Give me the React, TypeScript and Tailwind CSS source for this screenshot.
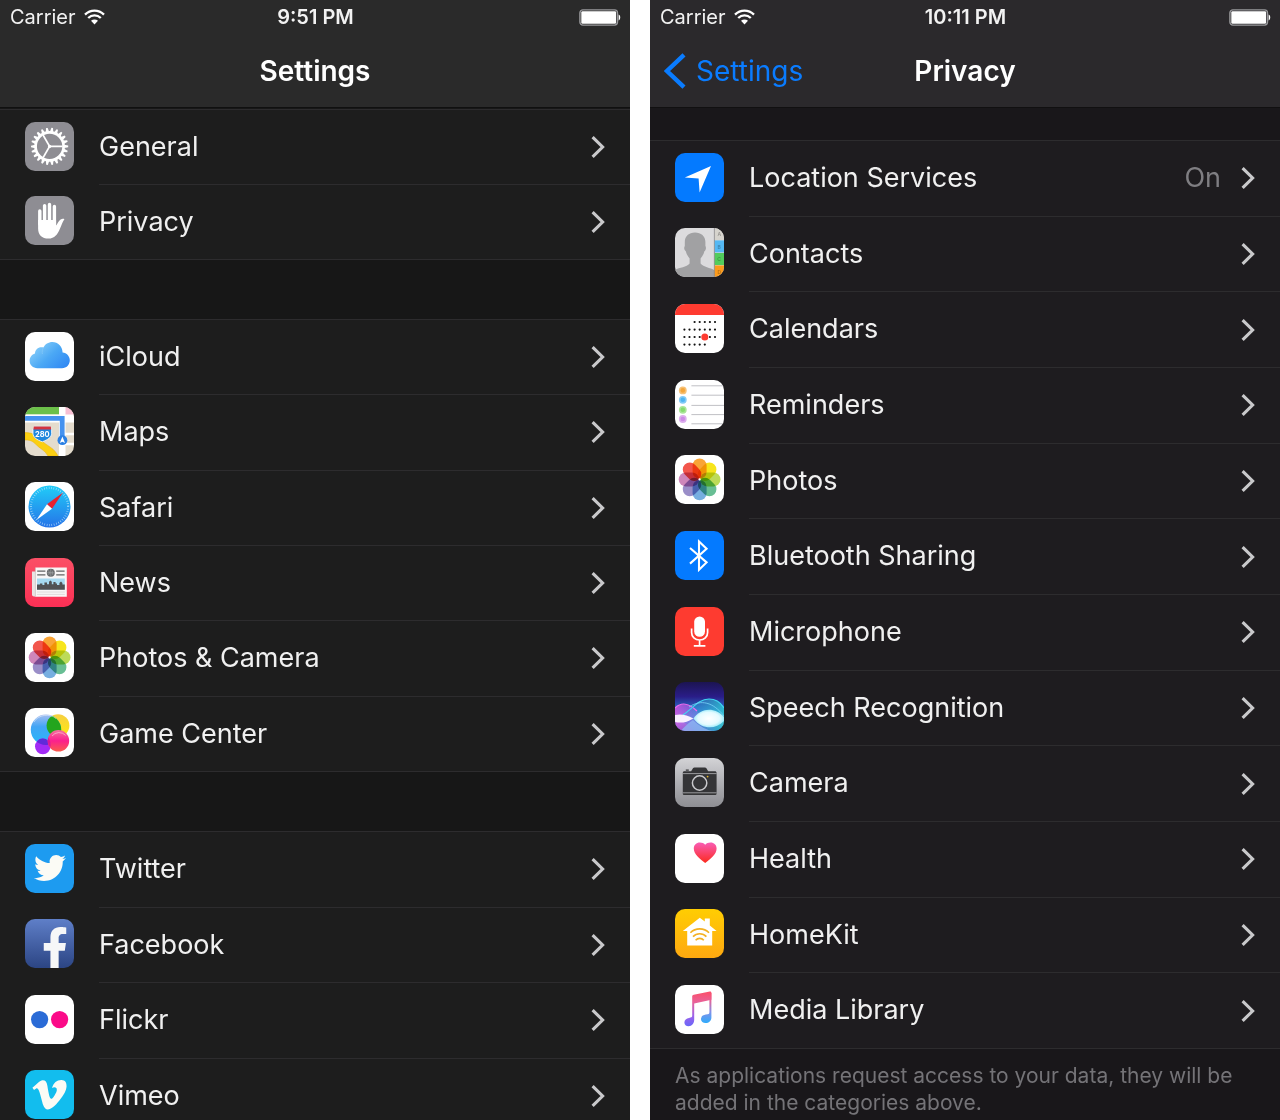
import React from "react";
import { FaTwitter, FaFacebookF, FaVimeoV } from "react-icons/fa";

type Item = { label: string; icon: React.ReactNode; value?: string };

function Tile({ children, className = "" }: { children: React.ReactNode; className?: string }) {
  return (
    <span className={`relative flex size-[49px] shrink-0 items-center justify-center overflow-hidden rounded-[10px] ${className}`}>
      {children}
    </span>
  );
}

function Art({ children }: { children: React.ReactNode }) {
  return (
    <svg viewBox="0 0 49 49" className="size-full" aria-hidden="true">
      {children}
    </svg>
  );
}

function GeneralIcon() {
  const teeth = Array.from({ length: 22 }, (_, i) => (i * 360) / 22);
  return (
    <Tile className="bg-[#8e8d93]">
      <Art>
        <g transform="translate(24.6 24.4)" stroke="#fff" fill="none">
          {teeth.map((a) => (
            <path key={a} d="M-1.7 -14.6L-0.8 -18.6H0.8L1.7 -14.6Z" fill="#fff" stroke="none" transform={`rotate(${a + 8})`} />
          ))}
          <circle r="14" strokeWidth="2.7" />
          {[0, 120, 240].map((a) => (
            <path key={a} d="M0 0H13" strokeWidth="1.8" transform={`rotate(${a})`} />
          ))}
          <circle r="1.6" fill="#fff" stroke="none" />
        </g>
      </Art>
    </Tile>
  );
}

function PrivacyIcon() {
  return (
    <Tile className="bg-[#8e8d93]">
      <Art>
        <g fill="none" stroke="#fff" strokeLinecap="round" strokeWidth="3.4">
          <path d="M14.8 15V28M19.6 9.6V27M24.5 8.4V27M29.4 10.4V28" />
        </g>
        <path
          d="M13.1 24H31.1V29.6C32.6 27.6 33.6 24.6 35.6 23.4C37 22.6 39 22.8 39.4 23.2C37.6 25.4 36.6 29 34.8 33C32.6 38.4 29.4 42.6 23.6 42.6C16.8 42.6 13.1 38.6 13.1 32.4Z"
          fill="#fff"
        />
      </Art>
    </Tile>
  );
}

function ICloudIcon() {
  return (
    <Tile className="bg-white">
      <Art>
        <defs>
          <linearGradient id="cloud" x1="0" y1="0.2" x2="1" y2="0.9">
            <stop offset="0" stopColor="#8fd3fa" />
            <stop offset="0.5" stopColor="#4ba8f5" />
            <stop offset="1" stopColor="#2f86f3" />
          </linearGradient>
        </defs>
        <path
          d="M12.4 36.2C8 36.2 4.6 33 4.6 28.8C4.6 25.4 6.8 22.6 10 21.6C10 17.8 13 15.2 16.2 15.2C17 15.2 17.8 15.4 18.4 15.6C20 12.2 23.4 10 27.4 10C33 10 37.4 14.4 37.6 20.4C41.8 20.8 44.8 24.2 44.8 28.2C44.8 32.6 41.4 36.2 37 36.2Z"
          fill="url(#cloud)"
        />
        <path d="M18.2 15.6C17.2 18 17 20 17.4 22" stroke="#8bcdf9" strokeWidth="0.6" fill="none" />
      </Art>
    </Tile>
  );
}

function MapsIcon() {
  return (
    <Tile className="bg-[#e4dccd]">
      <Art>
        <path d="M0 0H34V7.6H0Z" fill="#6cc04a" />
        <path d="M40 0H49V8H40Z" fill="#f7bfd3" />
        <path d="M34 0H40.5V49H34Z" fill="#fff" />
        <path d="M0 7.6H49V15.4H0Z" fill="#fff" />
        <path d="M40 27H49M40 37H49" stroke="#fff" strokeWidth="2.4" />
        <path d="M0 25.5C9 25.5 13 30 18 35C24 40 29 41 33 49H23C20 43 15 42 10 36.5C6 33 4 33 0 33Z" fill="#fbcf12" stroke="#eeb50c" strokeWidth="0.6" />
        <path d="M0 11.4H37.2V31" stroke="#4592ef" strokeWidth="4.8" fill="none" />
        <path d="M8 22.6C8.8 21.6 9.4 20.6 9.2 19.4H25.4C25.2 20.6 25.8 21.6 26.6 22.6V26.4C26.6 30.4 23 32.6 17.3 34.8C11.6 32.6 8 30.4 8 26.4Z" fill="#2187dd" stroke="#fff" strokeWidth="0.8" />
        <path d="M8.8 19.4H25.8L26.2 22.4H8.4Z" fill="#d3343f" />
        <text x="17.3" y="29.8" textAnchor="middle" fontSize="7.5" fontWeight="700" fill="#fff" fontFamily="Inter, sans-serif">280</text>
        <circle cx="37.4" cy="33.2" r="4.9" fill="#2b80e4" />
        <path d="M37.4 29.6L40 36L37.4 34.8L34.8 36Z" fill="#fff" />
      </Art>
    </Tile>
  );
}

function SafariIcon() {
  return (
    <Tile className="bg-white">
      <Art>
        <defs>
          <linearGradient id="compass" x1="0" y1="0" x2="0" y2="1">
            <stop offset="0" stopColor="#21cdf8" />
            <stop offset="1" stopColor="#2573e8" />
          </linearGradient>
        </defs>
        <circle cx="24.5" cy="24.5" r="21" fill="url(#compass)" />
        <circle cx="24.5" cy="24.5" r="18.6" fill="none" stroke="#cfeefd" strokeOpacity="0.8" strokeWidth="2.2" strokeDasharray="0.6 1.8" />
        <path d="M38 10.6L27 26.8L22 22.2Z" fill="#e8202f" />
        <path d="M11.4 38L27 26.8L22 22.2Z" fill="#fff" />
      </Art>
    </Tile>
  );
}

function NewsIcon() {
  return (
    <Tile className="bg-linear-to-b from-[#fb4f66] to-[#fb2f55]">
      <Art>
        <path d="M7 13.6H11V38.6H9C7.8 38.6 7 37.8 7 36.6Z" fill="#e8e4e4" />
        <path d="M10.4 9.4H41.8V38.8H10.4Z" fill="#f8f6f6" />
        <path d="M10.4 10V38.6" stroke="#c2b4b6" strokeWidth="0.6" />
        <path d="M12.2 13.2H20.4M31.2 13.2H39.6M12.2 16.8H20.4M31.2 16.8H39.6" stroke="#636465" strokeWidth="1.3" />
        <circle cx="25.8" cy="14.8" r="4" fill="#66686a" />
        <path d="M22 14.8H29.6M25.8 11V18.6M23.4 12.4C24.6 14 24.6 15.8 23.4 17.2M28.2 12.4C27 14 27 15.8 28.2 17.2" stroke="#c8caca" strokeWidth="0.4" fill="none" />
        <path d="M12 20.4H39.8V31.6H12Z" fill="#a6daf1" />
        <path d="M12 26.6H15V25.4H17.4V27H19.4V24.4H22V26.2H24V23.8L25.4 22.4L26.8 23.8V26.2H28.4V24H30.6V25.6H32V27H34.4V25L36 23.6L37.4 25V26.4H39.8V31.8H12Z" fill="#505254" />
        <path d="M12 34H39.8M12 36.4H39.8" stroke="#dcd8d8" strokeWidth="0.9" />
      </Art>
    </Tile>
  );
}

const petals = ["#f9a436", "#f7e51c", "#bddb58", "#68be94", "#76aee0", "#9a8ec8", "#ce86ba", "#f2564c"];

function PhotosIcon() {
  return (
    <Tile className="bg-white">
      <Art>
        <g transform="translate(24.6 24.4)" className="isolate">
          {petals.map((c, i) => (
            <rect key={c} x="-7" y="-20.9" width="14" height="20.4" rx="7" fill={c} className="mix-blend-multiply" transform={`rotate(${i * 45})`} />
          ))}
        </g>
        <circle cx="24.6" cy="24.4" r="1.1" fill="#fff" />
      </Art>
    </Tile>
  );
}

function GameCenterIcon() {
  return (
    <Tile className="bg-white">
      <Art>
        <defs>
          <linearGradient id="gcBlue" x1="0" y1="0" x2="0" y2="1">
            <stop offset="0" stopColor="#a4bdf0" />
            <stop offset="0.4" stopColor="#42a5f5" />
            <stop offset="1" stopColor="#28b8f9" />
          </linearGradient>
          <linearGradient id="gcYellow" x1="0" y1="0" x2="0" y2="1">
            <stop offset="0" stopColor="#f6cf43" />
            <stop offset="1" stopColor="#fdea0b" />
          </linearGradient>
          <linearGradient id="gcPink" x1="0" y1="0" x2="0" y2="1">
            <stop offset="0" stopColor="#f5719d" />
            <stop offset="0.5" stopColor="#fb1f8e" />
            <stop offset="1" stopColor="#fb5a4a" />
          </linearGradient>
          <clipPath id="gcClip">
            <circle cx="21" cy="21.8" r="15.2" />
          </clipPath>
        </defs>
        <circle cx="33" cy="17.6" r="11.4" fill="url(#gcYellow)" />
        <circle cx="21" cy="21.8" r="15.2" fill="url(#gcBlue)" />
        <circle cx="33" cy="17.6" r="11.4" fill="#23a51d" clipPath="url(#gcClip)" />
        <circle cx="17.8" cy="38.4" r="7.8" fill="#a22bf5" />
        <circle cx="17.8" cy="38.4" r="7.8" fill="#5f2ad9" clipPath="url(#gcClip)" />
        <circle cx="33.4" cy="32.8" r="10.8" fill="url(#gcPink)" />
        <path d="M24.6 38.6A10.8 10.8 0 0 1 23.4 29.4A15 15 0 0 1 25.6 38.4Z" fill="#d9169c" />
        <path d="M9 14C13 6.6 25 5 31 10.6M27 28A9 9 0 0 1 40.6 27.4" stroke="#fff" strokeOpacity="0.45" strokeWidth="1" fill="none" />
      </Art>
    </Tile>
  );
}

function TwitterIcon() {
  return (
    <Tile className="bg-[#1d9bf0]">
      <FaTwitter className="size-8 text-[#fbfbf5]" aria-hidden="true" />
    </Tile>
  );
}

function FacebookIcon() {
  return (
    <Tile className="bg-linear-to-b from-[#5f7fc8] to-[#2c4584]">
      <FaFacebookF className="absolute -bottom-px left-[9px] size-[42px] text-[#f6f7f8]" aria-hidden="true" />
    </Tile>
  );
}

function FlickrIcon() {
  return (
    <Tile className="bg-white">
      <Art>
        <circle cx="14.6" cy="24.6" r="8.6" fill="#2a6bd6" />
        <circle cx="34.6" cy="24.6" r="8.6" fill="#fb0a88" />
      </Art>
    </Tile>
  );
}

function VimeoIcon() {
  return (
    <Tile className="bg-[#12bdee]">
      <FaVimeoV className="size-[39px] text-[#fbfbf5]" aria-hidden="true" />
    </Tile>
  );
}

function LocationIcon() {
  return (
    <Tile className="bg-[#047aff]">
      <Art>
        <path d="M36 13L24.6 39.6L23.6 25.6L9.8 24.4Z" fill="#fff" />
      </Art>
    </Tile>
  );
}

function ContactsIcon() {
  const tabs = [
    { l: "A", y: 0, c: "#d6d3cd" },
    { l: "B", y: 12.4, c: "#55b8f3" },
    { l: "C", y: 25, c: "#52cc5c" },
    { l: "D", y: 37.4, c: "#fb9a1c" },
  ];
  return (
    <Tile className="bg-[#dcdbdd]">
      <Art>
        <path
          d="M20 4.4C26 4.4 30.4 8 30.4 14V18C31.4 19.4 31 22 29.4 23.2C28.8 26 27.4 28.4 25.6 30.4V35.6C28.6 39.6 35 39.4 39.6 42.4V49H0V42C4.6 39.4 11.6 39.6 14.6 35.6V30.4C12.8 28.4 11.4 26 10.8 23.2C9 22 8.8 19.4 9.8 18V14C9.8 8 14 4.4 20 4.4Z"
          fill="#a1a1a3"
        />
        <path d="M39.4 0V49" stroke="#78777a" strokeWidth="0.8" />
        {tabs.map((t) => (
          <g key={t.l}>
            <rect x="39.8" y={t.y} width="9.2" height="12" fill={t.c} />
            <text x="44.2" y={t.y + 8.2} textAnchor="middle" fontSize="5" fontWeight="600" fill="#000" fillOpacity="0.3" fontFamily="Inter, sans-serif">{t.l}</text>
          </g>
        ))}
      </Art>
    </Tile>
  );
}

function CalendarsIcon() {
  const rows = [
    { y: 18, from: 2, to: 6 },
    { y: 25.6, from: 0, to: 6 },
    { y: 33, from: 0, to: 6 },
    { y: 40.6, from: 0, to: 4 },
  ];
  return (
    <Tile className="bg-white">
      <Art>
        <path d="M0 0H49V11H0Z" fill="#fe3b30" />
        {rows.map((r) =>
          Array.from({ length: r.to - r.from + 1 }, (_, i) => (
            <circle key={`${r.y}-${i}`} cx={9.4 + (r.from + i) * 5.1} cy={r.y} r="1.1" fill="#111" />
          )),
        )}
        <circle cx="29.8" cy="33" r="3.5" fill="#fe3b30" />
      </Art>
    </Tile>
  );
}

function RemindersIcon() {
  const dots = [
    { y: 10.4, c: "#f3a63c" },
    { y: 19.8, c: "#4db3f2" },
    { y: 29.8, c: "#86da6e" },
    { y: 39, c: "#cd8ae6" },
  ];
  return (
    <Tile className="bg-white">
      <Art>
        {dots.map((d) => (
          <g key={d.y}>
            <circle cx="7.8" cy={d.y} r="3.9" fill={d.c} fillOpacity="0.7" />
            <circle cx="7.8" cy={d.y} r="2.3" fill={d.c} />
          </g>
        ))}
        <path d="M16.4 5.8H49M16.4 15.2H49M16.4 25.4H49M16.4 34.6H49M16.4 43.8H49" stroke="#b9b9bd" strokeWidth="0.9" />
      </Art>
    </Tile>
  );
}

function BluetoothIcon() {
  return (
    <Tile className="bg-[#047aff]">
      <Art>
        <path d="M15 17L31.6 31.4L24 38.8V10.4L31.6 17.8L15 32.6" fill="none" stroke="#fff" strokeWidth="2.1" />
      </Art>
    </Tile>
  );
}

function MicrophoneIcon() {
  return (
    <Tile className="bg-[#fe3b30]">
      <Art>
        <rect x="19.2" y="9.4" width="10.8" height="20.4" rx="5.4" fill="#fff" />
        <path d="M16.6 21.4V25.4C16.6 30 20 33 24.6 33C29.2 33 32.6 30 32.6 25.4V21.4M24.6 33V38.6M18.8 38.8H30.4" fill="none" stroke="#fff" strokeWidth="1.7" />
      </Art>
    </Tile>
  );
}

function SpeechIcon() {
  return (
    <Tile>
      <Art>
        <defs>
          <linearGradient id="spBase" x1="0" y1="0" x2="0" y2="1">
            <stop offset="0" stopColor="#1c1452" />
            <stop offset="0.3" stopColor="#2a1d88" />
            <stop offset="0.55" stopColor="#2a6cc4" />
            <stop offset="0.8" stopColor="#78b4ea" />
            <stop offset="1" stopColor="#2560a8" />
          </linearGradient>
          <linearGradient id="spPink" x1="0" y1="0" x2="1" y2="0">
            <stop offset="0" stopColor="#e052e4" />
            <stop offset="1" stopColor="#7a5fe8" stopOpacity="0.3" />
          </linearGradient>
          <linearGradient id="spTeal" x1="0" y1="0" x2="1" y2="0">
            <stop offset="0" stopColor="#3a7ae0" stopOpacity="0.3" />
            <stop offset="1" stopColor="#2fd0d0" />
          </linearGradient>
          <radialGradient id="spGlow">
            <stop offset="0" stopColor="#fff" />
            <stop offset="0.7" stopColor="#e4fbff" />
            <stop offset="1" stopColor="#a0ecfa" />
          </radialGradient>
        </defs>
        <rect width="49" height="49" fill="url(#spBase)" />
        <path d="M0 26C6 20 14 21 22 29C30 37 36 44 44 49H0Z" fill="url(#spPink)" fillOpacity="0.8" />
        <path d="M4 36C16 30 22 17 34 17C42 17 46 21 49 26V49H20Z" fill="url(#spTeal)" fillOpacity="0.75" />
        <path d="M0 26C6 20 14 21 22 29" stroke="#f06af0" strokeWidth="1.2" fill="none" />
        <path d="M8 33C18 26 24 17 34 17C42 17 46 21 49 26" stroke="#3fd5f0" strokeWidth="1.2" fill="none" />
        <path d="M14 25C26 17 38 20 49 34" stroke="#7ad5fa" strokeWidth="0.8" fill="none" />
        <path d="M0 33C6 31.6 12 33 18.4 36.4C12 40.4 6 41.4 0 40Z" fill="#faf0ff" />
        <path d="M18.4 36.4C26 25.4 40 24.6 49 35V39C40 48 27 47.6 18.4 36.4Z" fill="url(#spGlow)" />
        <path d="M18 38C12 42 8 46 6 49H40C32 49 24 44 18 38Z" fill="#8fb4f2" fillOpacity="0.8" />
      </Art>
    </Tile>
  );
}

function CameraIcon() {
  return (
    <Tile className="bg-linear-to-b from-[#d3d3d6] to-[#8e8e93]">
      <Art>
        <path d="M7.8 14.8C7.8 13.8 8.4 13.2 9.4 13.2H15.6C17 13.2 17.4 9.4 19.4 9.4H30C32 9.4 32.4 13.2 33.8 13.2H39.8C40.8 13.2 41.6 13.8 41.6 14.8V35.4C41.6 36.4 40.8 37 39.8 37H9.4C8.4 37 7.8 36.4 7.8 35.4Z" fill="#353537" />
        <path d="M10.8 11.6H13.8V12.8H10.8Z" fill="#353537" />
        <path d="M7.8 15.6H41.6M7.8 34.8H41.6" stroke="#b4b4b8" strokeWidth="0.8" />
        <circle cx="24.6" cy="25" r="8.8" fill="#353537" />
        <circle cx="24.6" cy="25" r="7.2" fill="none" stroke="#c9c9cc" strokeWidth="1.5" />
        <circle cx="32.6" cy="18.6" r="0.9" fill="#e4b62a" />
      </Art>
    </Tile>
  );
}

function HealthIcon() {
  return (
    <Tile className="bg-white">
      <Art>
        <defs>
          <linearGradient id="heart" x1="0" y1="0" x2="0" y2="1">
            <stop offset="0" stopColor="#f95cb4" />
            <stop offset="1" stopColor="#fb2a1e" />
          </linearGradient>
        </defs>
        <path d="M30.2 29C24 24.6 18.8 20 18.8 14.6C18.8 11 21.4 8.6 24.8 8.6C27.2 8.6 29 9.4 30.2 10.8C31.4 9.4 33.2 8.6 35.6 8.6C39 8.6 41.6 11 41.6 14.6C41.6 20 36.4 24.6 30.2 29Z" fill="url(#heart)" />
      </Art>
    </Tile>
  );
}

function HomeKitIcon() {
  return (
    <Tile className="bg-linear-to-b from-[#ffcd02] to-[#fea810]">
      <Art>
        <path d="M7.8 22L24.8 8.8L29.8 12.6V9.6H34.8V16.6L41.6 22H37.2V36.6H12.2V22Z" fill="#fff" />
        <path d="M15.4 23.8C20.4 18.6 29 18.6 34 23.8M18 27.6C21.6 23.8 27.8 23.8 31.4 27.6M20.6 31.2C22.8 28.8 26.6 28.8 28.8 31.2" fill="none" stroke="#f3b123" strokeWidth="1.6" />
      </Art>
    </Tile>
  );
}

function MediaIcon() {
  return (
    <Tile className="bg-white">
      <Art>
        <defs>
          <linearGradient id="noteLeft" gradientUnits="userSpaceOnUse" x1="0" y1="7" x2="0" y2="41">
            <stop offset="0" stopColor="#fb4f6a" />
            <stop offset="0.3" stopColor="#e8629a" />
            <stop offset="0.7" stopColor="#9d62ea" />
            <stop offset="1" stopColor="#6a66f8" />
          </linearGradient>
          <linearGradient id="noteRight" gradientUnits="userSpaceOnUse" x1="0" y1="7" x2="0" y2="38">
            <stop offset="0" stopColor="#fb4f6a" />
            <stop offset="0.3" stopColor="#e0659c" />
            <stop offset="0.65" stopColor="#7f92ea" />
            <stop offset="1" stopColor="#2fabfb" />
          </linearGradient>
        </defs>
        <path d="M34.4 8V27C34.4 29 33.6 29.2 30.8 29.6C28 30 26 31.6 26 34.2C26 36.4 28 38 30.6 38C33.8 38 36.4 35.8 36.4 32.4V8Z" fill="url(#noteRight)" />
        <path d="M17.2 11.6C17.2 10.6 17.8 10 18.8 9.8L34.8 6.6C35.8 6.4 36.4 7 36.4 8V14.8L19.2 18.4V34.6C19.2 38.6 17 41.2 13.6 41.2C11 41.2 9.4 39.6 9.4 37.4C9.4 34.8 11.4 33.4 14 32.9C16.6 32.4 17.2 32.2 17.2 30.4Z" fill="url(#noteLeft)" />
      </Art>
    </Tile>
  );
}

function WifiIcon() {
  return (
    <svg viewBox="0 0 21 16" className="h-4 w-[21px]" aria-label="Wi-Fi">
      <path d="M1 5.6C6.4 0.2 14.6 0.2 20 5.6" fill="none" stroke="#fff" strokeWidth="2.3" />
      <path d="M4.2 9C7.8 5.4 13.2 5.4 16.8 9" fill="none" stroke="#fff" strokeWidth="2.3" />
      <path d="M10.5 15.4L7 11.8C9 10 12 10 14 11.8Z" fill="#fff" />
    </svg>
  );
}

function BatteryIcon() {
  return (
    <svg viewBox="0 0 42 17" className="h-[17px] w-[42px]" aria-label="Battery full">
      <rect x="0.9" y="0.9" width="37.6" height="15.2" rx="3" fill="none" stroke="#99999c" strokeWidth="1.4" />
      <rect x="2.3" y="2.2" width="34.8" height="12.6" rx="1.2" fill="#fff" />
      <path d="M39.6 5.6C41.8 6.2 41.8 10.8 39.6 11.4Z" fill="#fff" />
    </svg>
  );
}

function Header({ time, title, back }: { time: string; title: string; back?: string }) {
  return (
    <header className={`border-b border-black/60 ${back ? "bg-[#2b292c]" : "bg-[#2a2a2a]"}`}>
      <div className="grid h-[34px] grid-cols-3 items-center pr-[9px] pl-[10px] text-xl text-[#f2f2f2]">
        <span className="flex items-center gap-2">
          <span>Carrier</span>
          <WifiIcon />
        </span>
        <time className="text-center font-semibold">{time}</time>
        <span className="justify-self-end">
          <BatteryIcon />
        </span>
      </div>
      <div className="grid h-[73px] grid-cols-[1fr_auto_1fr] items-center px-[14px]">
        <div className="flex">
          {back && (
            <a href="#settings" className="inline-flex items-center gap-[10px] text-[28px] text-[#0a7cff]">
              <svg viewBox="0 0 22 36" className="h-9 w-[22px]" aria-hidden="true">
                <path d="M20 1.8L3 18L20 34.2" fill="none" stroke="currentColor" strokeWidth="4.4" />
              </svg>
              {back}
            </a>
          )}
        </div>
        <h1 className="text-[28px] font-semibold text-white">{title}</h1>
      </div>
    </header>
  );
}

function Row({ item, last }: { item: Item; last: boolean }) {
  return (
    <li className={last ? "flex border-b border-[#2d2c2e]" : "flex"}>
      <a href={`#${item.label}`} className="flex grow items-stretch pl-[25px]">
        <span className="flex items-center pr-[25px] pb-[3px]">{item.icon}</span>
        <span className={`flex grow items-center justify-between pr-[25px] ${last ? "" : "border-b border-[#2d2c2e]"}`}>
          <span className="text-[27px] text-[#f0f0f0]">{item.label}</span>
          <span className="flex items-center gap-5">
            {item.value && <span className="text-[27px] text-[#7f7e82]">{item.value}</span>}
            <svg viewBox="0 0 14 22" className="h-[22px] w-[14px]" aria-hidden="true">
              <path d="M1.6 1.2L11.6 11L1.6 20.8" fill="none" stroke="#c9c9cb" strokeWidth="3.1" />
            </svg>
          </span>
        </span>
      </a>
    </li>
  );
}

function Group({ items, className }: { items: Item[]; className: string }) {
  return (
    <ul className={`grid shrink-0 auto-rows-fr border-t border-[#2d2c2e] ${className}`}>
      {items.map((item, i) => (
        <Row key={item.label} item={item} last={i === items.length - 1} />
      ))}
    </ul>
  );
}

const system: Item[] = [
  { label: "General", icon: <GeneralIcon /> },
  { label: "Privacy", icon: <PrivacyIcon /> },
];

const apps: Item[] = [
  { label: "iCloud", icon: <ICloudIcon /> },
  { label: "Maps", icon: <MapsIcon /> },
  { label: "Safari", icon: <SafariIcon /> },
  { label: "News", icon: <NewsIcon /> },
  { label: "Photos & Camera", icon: <PhotosIcon /> },
  { label: "Game Center", icon: <GameCenterIcon /> },
];

const social: Item[] = [
  { label: "Twitter", icon: <TwitterIcon /> },
  { label: "Facebook", icon: <FacebookIcon /> },
  { label: "Flickr", icon: <FlickrIcon /> },
  { label: "Vimeo", icon: <VimeoIcon /> },
];

const privacy: Item[] = [
  { label: "Location Services", icon: <LocationIcon />, value: "On" },
  { label: "Contacts", icon: <ContactsIcon /> },
  { label: "Calendars", icon: <CalendarsIcon /> },
  { label: "Reminders", icon: <RemindersIcon /> },
  { label: "Photos", icon: <PhotosIcon /> },
  { label: "Bluetooth Sharing", icon: <BluetoothIcon /> },
  { label: "Microphone", icon: <MicrophoneIcon /> },
  { label: "Speech Recognition", icon: <SpeechIcon /> },
  { label: "Camera", icon: <CameraIcon /> },
  { label: "Health", icon: <HealthIcon /> },
  { label: "HomeKit", icon: <HomeKitIcon /> },
  { label: "Media Library", icon: <MediaIcon /> },
];

export default function App() {
  return (
    <div className="flex h-screen gap-5 overflow-hidden bg-white font-['Inter',sans-serif]">
      <section className="flex min-w-0 flex-1 flex-col bg-[#171717]">
        <Header time="9:51 PM" title="Settings" />
        <main className="flex flex-col gap-[59px] pt-px">
          <Group items={system} className="min-h-[151px] bg-[#1d1d1d]" />
          <Group items={apps} className="min-h-[453px] bg-[#1d1d1d]" />
          <Group items={social} className="min-h-[303px] bg-[#1d1d1d]" />
        </main>
      </section>
      <section className="flex min-w-0 flex-1 flex-col bg-[#19171a]">
        <Header time="10:11 PM" title="Privacy" back="Settings" />
        <div className="pt-8">
          <Group items={privacy} className="min-h-[909px] bg-[#1e1c1f]" />
          <p className="px-[25px] pt-[13px] text-[21px] leading-[27px] text-[#747377]">
            As applications request access to your data, they will be added in the categories above.
          </p>
        </div>
      </section>
    </div>
  );
}
